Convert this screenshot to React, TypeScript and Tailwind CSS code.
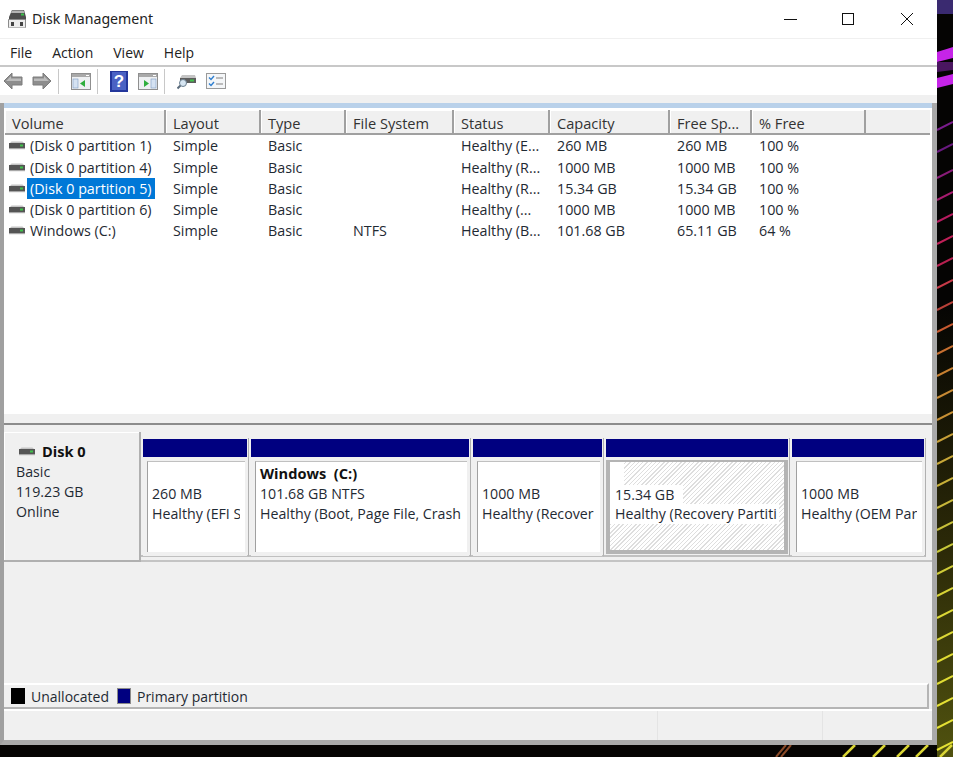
import * as React from "react";

const columns = [
  { label: "Volume", width: "w-[161px]" },
  { label: "Layout", width: "w-[95px]" },
  { label: "Type", width: "w-[85px]" },
  { label: "File System", width: "w-[108px]" },
  { label: "Status", width: "w-[96px]" },
  { label: "Capacity", width: "w-[120px]" },
  { label: "Free Sp...", width: "w-[82px]" },
  { label: "% Free", width: "w-[114px]" },
];

const rows = [
  ["(Disk 0 partition 1)", "Simple", "Basic", "", "Healthy (E...", "260 MB", "260 MB", "100 %"],
  ["(Disk 0 partition 4)", "Simple", "Basic", "", "Healthy (R...", "1000 MB", "1000 MB", "100 %"],
  ["(Disk 0 partition 5)", "Simple", "Basic", "", "Healthy (R...", "15.34 GB", "15.34 GB", "100 %"],
  ["(Disk 0 partition 6)", "Simple", "Basic", "", "Healthy (...", "1000 MB", "1000 MB", "100 %"],
  ["Windows (C:)", "Simple", "Basic", "NTFS", "Healthy (B...", "101.68 GB", "65.11 GB", "64 %"],
];

// streaks in the wallpaper strip: [y at the window edge, colour]
const streaks: [number, string][] = [
  [130, "#7a1c8c"], [152, "#6a1a80"], [178, "#8a1c78"], [200, "#a81c70"], [222, "#b81c60"],
  [244, "#c02058"], [266, "#b82050"], [288, "#c83a48"], [310, "#b84038"], [332, "#c85a30"],
  [354, "#c87030"], [376, "#c88030"], [398, "#c88a34"], [420, "#c89034"], [442, "#c8a038"],
  [464, "#c8a838"], [486, "#c8b038"], [508, "#c8b83a"], [530, "#c8c03a"], [552, "#c8c83a"],
  [574, "#d0cc38"], [596, "#d8d436"], [618, "#dcd836"], [640, "#dcd836"], [662, "#e0dc34"],
  [684, "#e0dc34"], [706, "#e4e034"], [728, "#e4e034"], [750, "#e4e034"],
];

function DriveIcon({ className }: { className?: string }) {
  return (
    <svg viewBox="0 0 18 9" className={className}>
      <path d="M2 2 L3.5 0.5 H14.5 L16 2 Z" fill="#c4c4c4" />
      <rect x="1" y="2" width="16" height="5" fill="#555" />
      <rect x="1" y="7" width="16" height="1.2" fill="#a8a8a8" />
      <rect x="12" y="3.5" width="3" height="2" fill="#3fc24a" />
    </svg>
  );
}

function AppIcon() {
  return (
    <svg viewBox="0 0 20 20" className="h-[20px] w-[20px]">
      <path d="M2 8 L5 1 H17 L19 8 V11 H2 Z" fill="#4e4e4e" />
      <path d="M5 1.5 H16.5 L17.5 4 H4 Z" fill="#b4b4b4" />
      <rect x="14" y="4.5" width="3" height="2" fill="#38c048" />
      <rect x="1" y="10" width="18" height="9" rx="1" fill="#8b8b8b" />
      <rect x="2" y="11" width="16" height="7.5" fill="#ececec" />
      <rect x="4" y="13" width="3" height="4" fill="#444" />
      <rect x="13" y="13" width="3" height="4" fill="#444" />
    </svg>
  );
}

function ArrowIcon({ flip }: { flip?: boolean }) {
  return (
    <svg viewBox="0 0 20 18" className={flip ? "h-[18px] w-[20px] -scale-x-100" : "h-[18px] w-[20px]"}>
      <path d="M1 9 L9 1 V5 H19 V13 H9 V17 Z" fill="#8e8e8e" stroke="#7c7c7c" strokeWidth="1" />
      <path d="M3 9 L8 4 V6.5 H18 V9 Z" fill="#bcbcbc" />
    </svg>
  );
}

function PaneIcon({ right }: { right?: boolean }) {
  return (
    <svg viewBox="0 0 20 17" className="h-[17px] w-[20px]">
      <rect x="0.5" y="0.5" width="19" height="16" fill="#eef0f2" stroke="#8f8f8f" />
      <rect x="1" y="1" width="18" height="3" fill="#a9a9a9" />
      <rect x="15" y="2" width="3" height="1" fill="#fff" />
      {right ? (
        <>
          <path d="M6 7 L11 10.5 L6 14 Z" fill="#2fae3c" />
          <rect x="13" y="6" width="5" height="9" fill="#d5e2f2" stroke="#7f9dc4" strokeWidth="0.6" />
        </>
      ) : (
        <>
          <rect x="2" y="6" width="5" height="9" fill="#d5e2f2" stroke="#7f9dc4" strokeWidth="0.6" />
          <path d="M14 7 L9 10.5 L14 14 Z" fill="#2fae3c" />
        </>
      )}
    </svg>
  );
}

function HelpIcon() {
  return (
    <svg viewBox="0 0 18 21" className="h-[21px] w-[18px]">
      <rect width="18" height="21" fill="#24379c" />
      <rect x="2" y="1" width="14" height="18" fill="#4a62c4" />
      <text x="9" y="16" textAnchor="middle" fontSize="17" fontWeight="700" fill="#fff" fontFamily="Liberation Sans, sans-serif">?</text>
    </svg>
  );
}

function SearchDriveIcon() {
  return (
    <svg viewBox="0 0 20 18" className="h-[18px] w-[20px]">
      <path d="M3 6 L5 3 H18 L19 6 Z" fill="#c4c4c4" />
      <rect x="3" y="6" width="16" height="5" fill="#5d5d5d" />
      <rect x="13" y="7.5" width="4" height="2" fill="#42c24c" />
      <circle cx="6" cy="11" r="3.5" fill="#d7e6f3" stroke="#6b7f90" />
      <path d="M3.5 13.5 L0.5 16.5" stroke="#5b6c7c" strokeWidth="2" />
    </svg>
  );
}

function ChecklistIcon() {
  return (
    <svg viewBox="0 0 20 16" className="h-[16px] w-[20px]">
      <rect x="0.5" y="0.5" width="19" height="15" fill="#f4f6f8" stroke="#9a9a9a" />
      <path d="M3 4.5 L5 6.5 L8 3 M3 10.5 L5 12.5 L8 9" stroke="#2f7fd0" strokeWidth="1.4" fill="none" />
      <path d="M10 5 H17 M10 11 H17" stroke="#a8a8a8" strokeWidth="1.4" />
    </svg>
  );
}

function ToolbarDivider() {
  return <div className="h-[25px] w-px bg-[#c8c8c8]" />;
}

function Partition({
  width,
  title,
  size,
  status,
}: {
  width: string;
  title?: string;
  size: string;
  status: string;
}) {
  return (
    <div className={`${width} h-[119px] shrink-0 border-r border-b-2 border-r-[#b0b0b0] border-b-[#c0c0c0] pl-[2px] pr-px pt-px`}>
      <div className="h-[18px] bg-[#000080]" />
      <div className="flex h-[99px] border-t-4 border-r-2 border-b-4 border-l-4 border-[#f0f0f0] bg-white">
        <div className="flex min-w-0 flex-1 flex-col overflow-hidden border-t border-l border-t-[#c0c0c0] border-l-[#a0a0a0] pl-[4px] pr-[5px] pt-px">
          <div className="h-[21px] whitespace-pre text-[14.6px] font-bold leading-[20px] text-[#111]">{title}</div>
          <div className="h-[20px] whitespace-nowrap leading-[20px]">{size}</div>
          <div className="h-[20px] overflow-hidden whitespace-nowrap leading-[20px]">{status}</div>
        </div>
      </div>
    </div>
  );
}

function SelectedPartition({ width, size, status }: { width: string; size: string; status: string }) {
  return (
    <div className={`${width} h-[119px] shrink-0 border-r border-b-2 border-r-[#b0b0b0] border-b-[#c0c0c0] pl-[2px] pr-px pt-px`}>
      <div className="h-[18px] bg-[#000080]" />
      <div className="h-[99px] pt-[3px] pb-[2px]">
        <div className="flex h-[94px] flex-col overflow-hidden border-t-2 border-r-4 border-b-4 border-l-4 border-[#b4b4b4] bg-white bg-[repeating-linear-gradient(135deg,#ffffff_0px,#ffffff_2px,#dedede_2px,#dedede_3px)]">
          <div className="h-[23px] w-[14px] shrink-0 bg-white" />
          <div className="h-[19px] w-[73px] shrink-0 whitespace-nowrap bg-white pl-[5px] leading-[20px]">{size}</div>
          <div className="mr-[5px] h-[20px] shrink-0 overflow-hidden whitespace-nowrap bg-white pl-[5px] leading-[20px]">{status}</div>
        </div>
      </div>
    </div>
  );
}

export default function App() {
  return (
    <div className="relative h-[757px] w-[953px] overflow-hidden bg-[#050403] font-['Open_Sans','Noto_Sans',sans-serif] text-[14.2px] text-[#1f2a33]">
      {/* wallpaper peeking out behind the window */}
      <svg className="absolute inset-0" width="953" height="757" viewBox="0 0 953 757">
        <defs>
          <linearGradient id="wall" x1="0" y1="0" x2="0" y2="1">
            <stop offset="0" stopColor="#050403" />
            <stop offset="0.55" stopColor="#2c2a08" />
            <stop offset="1" stopColor="#50520f" />
          </linearGradient>
        </defs>
        <rect x="937" y="300" width="16" height="457" fill="url(#wall)" />
        <rect x="937" y="0" width="16" height="14" fill="#3a2a70" />
        <path d="M937 52 L953 47 V58 L937 62 Z" fill="#c624e8" />
        <path d="M937 62 H953 V70 L937 72 Z" fill="#4a1660" />
        <path d="M937 78 L953 74 V84 L937 88 Z" fill="#c624e8" />
        {streaks.map(([y, color]) => (
          <path key={y} d={`M937 ${y} L953 ${y - 8}`} stroke={color} strokeWidth="2" />
        ))}
        <path d="M776 757 L786 745 M781 757 L791 745" stroke="#8a4a28" strokeWidth="2" />
        <g stroke="#d9d534" strokeWidth="2.5">
          <path d="M843 757 L855 745 M873 757 L885 745 M897 757 L909 745 M916 757 L928 745 M940 757 L952 745" />
        </g>
      </svg>

      <div className="relative flex h-[745px] w-[937px] flex-col bg-white">
        {/* title bar */}
        <div className="flex h-[39px] shrink-0 items-center border-b border-[#f0f0f0] pl-[7px]">
          <AppIcon />
          <span className="ml-[5px] font-['Noto_Sans','Open_Sans',sans-serif] text-[14.15px] text-[#222]">Disk Management</span>
          <div className="ml-auto flex items-center">
            <svg width="14" height="14" viewBox="0 0 14 14" className="mr-[44px]">
              <path d="M1 7.5 H14" stroke="#111" strokeWidth="1" />
            </svg>
            <svg width="14" height="14" viewBox="0 0 14 14" className="mr-[45px]">
              <rect x="1.5" y="1.5" width="11" height="11" fill="none" stroke="#111" />
            </svg>
            <svg width="14" height="14" viewBox="0 0 14 14" className="mr-[23px]">
              <path d="M1 1 L13 13 M13 1 L1 13" stroke="#111" strokeWidth="1" />
            </svg>
          </div>
        </div>

        {/* menu bar */}
        <div className="flex h-[28px] shrink-0 items-center gap-[20px] border-b-2 border-[#c8c8c8] pl-[10px] pt-px text-[14px] text-[#222]">
          <span>File</span>
          <span>Action</span>
          <span>View</span>
          <span>Help</span>
        </div>

        {/* toolbar */}
        <div className="flex h-[29px] shrink-0 items-center border-b border-[#f0f0f0] pl-[3px]">
          <ArrowIcon />
          <div className="ml-[9px]"><ArrowIcon flip /></div>
          <div className="ml-[6px]"><ToolbarDivider /></div>
          <div className="ml-[12px]"><PaneIcon /></div>
          <div className="ml-[6px]"><ToolbarDivider /></div>
          <div className="ml-[12px]"><HelpIcon /></div>
          <div className="ml-[10px]"><PaneIcon right /></div>
          <div className="ml-[6px]"><ToolbarDivider /></div>
          <div className="ml-[12px]"><SearchDriveIcon /></div>
          <div className="ml-[9px]"><ChecklistIcon /></div>
        </div>

        <div className="h-[7px] shrink-0 bg-[#f0f0f0]" />

        {/* console body */}
        <div className="flex min-h-0 flex-1 flex-col border-r-[5px] border-b-[5px] border-l-[4px] border-r-[#a9a9a9] border-b-[#a9a9a9] border-l-[#a0a0a0] bg-[#f0f0f0]">
          <div className="h-[5px] shrink-0 bg-[#b9d1ea]" />

          {/* volume list */}
          <div className="flex h-[306px] shrink-0 flex-col bg-white pl-px pr-[2px]">
            <div className="mt-[2px] flex h-[25px] shrink-0 border-b-2 border-[#a0a0a0] bg-[#f0f0f0]">
              {columns.map((col) => (
                <div
                  key={col.label}
                  className={`${col.width} h-[23px] shrink-0 whitespace-nowrap border-r-2 border-r-[#a0a0a0] pl-[7px] pt-[3px] text-[14.6px] leading-[20px] text-[#333] shadow-[inset_1px_1px_0_#fff]`}
                >
                  {col.label}
                </div>
              ))}
            </div>
            <div className="text-[14.3px]">
              {rows.map((row, i) => (
                <div key={row[0]} className={i === 0 ? "flex h-[22px] items-center pb-px" : "flex h-[21px] items-center"}>
                  {row.map((cell, c) => (
                    <div key={c} className={`${columns[c].width} flex shrink-0 items-center whitespace-nowrap ${c === 0 ? "pl-[3px]" : "pl-[7px]"}`}>
                      {c === 0 && <DriveIcon className="mr-px h-[9px] w-[18px]" />}
                      <span className={c === 0 && i === 2 ? "bg-[#0078d7] px-[3px] text-[#fff]" : c === 0 ? "px-[3px]" : ""}>{cell}</span>
                    </div>
                  ))}
                </div>
              ))}
            </div>
          </div>

          {/* splitter */}
          <div className="h-[11px] shrink-0 border-b-2 border-[#8c8c8c] bg-[#f0f0f0]" />

          {/* graphical view */}
          <div className="flex min-h-0 flex-1 flex-col">
            <div className="flex h-[137px] shrink-0 border-b-2 border-[#c4c4c4]">
              <div className="mt-[7px] h-[130px] w-[137px] shrink-0 border-r-2 border-b-2 border-r-[#b0b0b0] border-b-[#b0b0b0] pl-[12px] pt-[9px] leading-[20px] shadow-[inset_1px_1px_0_#fff]">
                <div className="mb-px flex h-[20px] items-center">
                  <DriveIcon className="ml-[2px] mr-[6px] h-[9px] w-[18px]" />
                  <span className="text-[14.6px] font-bold text-[#111]">Disk 0</span>
                </div>
                <div>Basic</div>
                <div>119.23 GB</div>
                <div>Online</div>
              </div>
              <div className="mt-[13px] flex">
                <Partition width="w-[108px]" size="260 MB" status="Healthy (EFI S" />
                <Partition width="w-[222px]" title="Windows  (C:)" size="101.68 GB NTFS" status="Healthy (Boot, Page File, Crash" />
                <Partition width="w-[133px]" size="1000 MB" status="Healthy (Recover" />
                <SelectedPartition width="w-[186px]" size="15.34 GB" status="Healthy (Recovery Partiti" />
                <Partition width="w-[136px]" size="1000 MB" status="Healthy (OEM Par" />
              </div>
            </div>
            <div className="flex-1" />
            {/* legend */}
            <div className="mr-[3px] flex h-[26px] shrink-0 items-center border-t-2 border-r-2 border-b-2 border-t-white border-r-[#b5b5b5] border-b-[#b5b5b5] pl-[7px] text-[14px]">
              <div className="h-[16px] w-[14px] bg-black" />
              <span className="ml-[6px]">Unallocated</span>
              <div className="ml-[8px] h-[16px] w-[14px] border border-[#8a8a8a] bg-[#000080]" />
              <span className="ml-[6px]">Primary partition</span>
            </div>
            {/* status bar */}
            <div className="flex h-[31px] shrink-0 border-t-2 border-t-white">
              <div className="flex-1" />
              <div className="w-[165px] border-l border-l-[#e4e4e4]" />
              <div className="w-[110px] border-l border-l-[#e4e4e4]" />
            </div>
          </div>
        </div>
      </div>
    </div>
  );
}
